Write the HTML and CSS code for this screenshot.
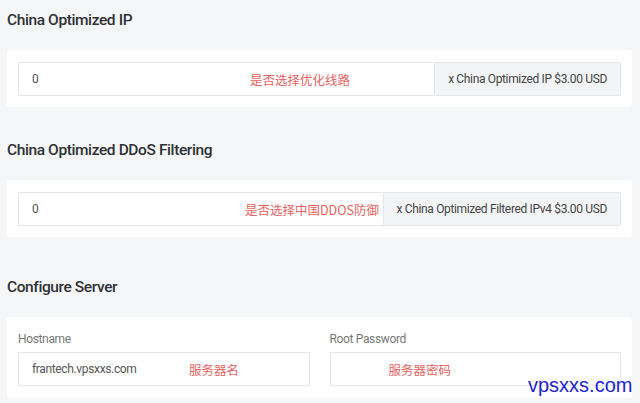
FILE: index.html
```html
<!DOCTYPE html>
<html>
<head>
<meta charset="utf-8">
<link rel="stylesheet" href="styles.css">
</head>
<body>
<div class="page">
  <h3 class="heading first">China Optimized IP</h3>
  <div class="card">
    <div class="group">
      <div class="field">
        <span class="value">0</span>
        <span class="note note-ip">是否选择优化线路</span>
      </div>
      <div class="addon">x China Optimized IP $3.00 USD</div>
    </div>
  </div>

  <h3 class="heading">China Optimized DDoS Filtering</h3>
  <div class="card">
    <div class="group">
      <div class="field">
        <span class="value">0</span>
        <span class="note note-ddos">是否选择中国DDOS防御</span>
      </div>
      <div class="addon">x China Optimized Filtered IPv4 $3.00 USD</div>
    </div>
  </div>

  <h3 class="heading third">Configure Server</h3>
  <div class="card card-server">
    <div class="col">
      <label class="label">Hostname</label>
      <div class="field">
        <span class="value">frantech.vpsxxs.com</span>
        <span class="note note-host">服务器名</span>
      </div>
    </div>
    <div class="col">
      <label class="label">Root Password</label>
      <div class="field">
        <span class="note note-pass">服务器密码</span>
      </div>
    </div>
  </div>
</div>
<div class="watermark">vpsxxs.com</div>
</body>
</html>
```
FILE: styles.css
```css
html, body {
  margin: 0;
  padding: 0;
  background: #f5f6f8;
  font-family: Roboto, "Noto Sans CJK SC", sans-serif;
  color: #333;
  width: 640px;
  height: 403px;
  overflow: hidden;
  position: relative;
}
.page {
  padding: 0 8px 0 7px;
}
.heading {
  margin: 0;
  font-size: 15.5px;
  font-weight: 500;
  letter-spacing: -0.4px;
  line-height: 20px;
  color: #2f3135;
  padding-top: 33px;
  padding-bottom: 20px;
}
.heading.first {
  padding-top: 10px;
}
.heading.third {
  padding-top: 40px;
}
.card {
  background: #fff;
  border-radius: 3px;
  padding: 12px 11px 11px 11px;
}
.group {
  display: flex;
  height: 34px;
}
.field {
  position: relative;
  flex: 1;
  display: flex;
  align-items: center;
  height: 34px;
  box-sizing: border-box;
  border: 1px solid #e4e6ea;
  background: #fff;
  padding: 0 13px;
  font-size: 12px;
  letter-spacing: -0.35px;
  color: #555;
}
.group .field {
  border-right: none;
  border-radius: 2px 0 0 2px;
}
.addon {
  flex: none;
  display: flex;
  align-items: center;
  box-sizing: border-box;
  height: 34px;
  border: 1px solid #e4e6ea;
  background: #f3f4f6;
  border-radius: 0 2px 2px 0;
  font-size: 12px;
  letter-spacing: -0.35px;
  color: #444;
  padding: 0 13px;
  white-space: nowrap;
}
.note {
  position: absolute;
  top: 50%;
  transform: translateY(-50%);
  color: #e85f5f;
  font-family: "Noto Sans CJK SC", sans-serif;
  font-size: 12.5px;
  letter-spacing: 0;
  white-space: nowrap;
}
.note-ip { left: 231px; }
.note-ddos { left: 226px; }
.note-host { left: 170px; }
.note-pass { left: 58px; }
.card-server {
  display: flex;
  gap: 20px;
  padding: 14px 11px 12px 11px;
}
.col {
  flex: 1;
  display: flex;
  flex-direction: column;
}
.col .field {
  flex: none;
}
.label {
  font-size: 12px;
  letter-spacing: -0.35px;
  color: #777;
  line-height: 16px;
  margin-bottom: 5px;
}
.watermark {
  position: absolute;
  left: 528px;
  top: 373px;
  font-family: "Liberation Sans", Arial, sans-serif;
  font-size: 20px;
  line-height: 24px;
  color: #2323c8;
}
```
